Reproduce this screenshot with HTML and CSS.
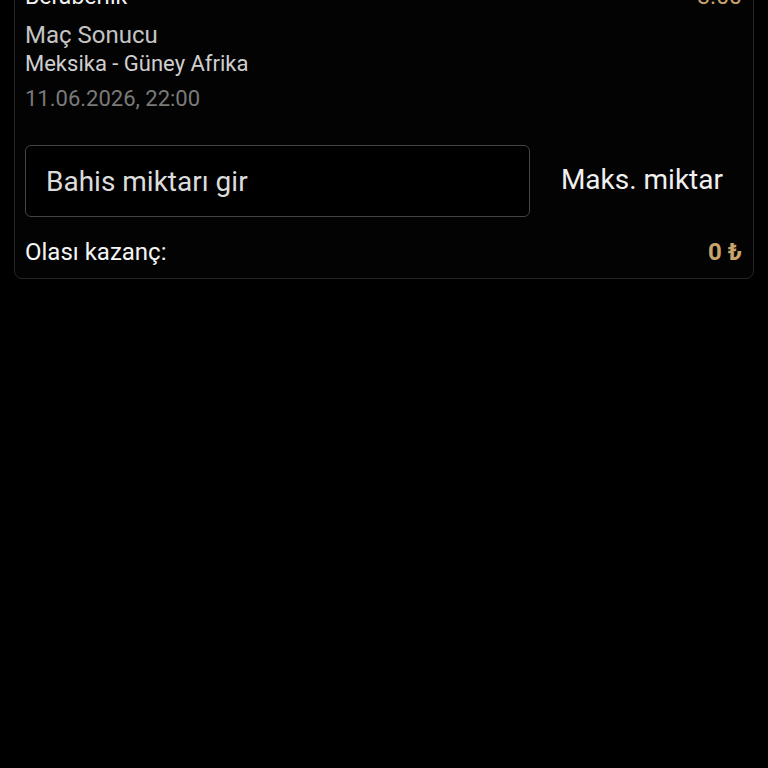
FILE: index.html
```html
<!DOCTYPE html>
<html lang="tr">
<head>
    <meta charset="UTF-8">
    <meta name="viewport" content="width=device-width, initial-scale=1.0">
    <title>Kupon</title>
    <link rel="stylesheet" href="styles.css">
</head>
<body>
    <div class="slip-card">
        <div class="pick-row">
            <span class="pick-name">Beraberlik</span>
            <span class="pick-odd">3.00</span>
        </div>
        <div class="market">Maç Sonucu</div>
        <div class="match">Meksika - Güney Afrika</div>
        <div class="match-date">11.06.2026, 22:00</div>

        <div class="stake-row">
            <input class="stake-input" type="text" placeholder="Bahis miktarı gir">
            <button class="max-btn">Maks. miktar</button>
        </div>

        <div class="win-row">
            <span class="win-label">Olası kazanç:</span>
            <span class="win-value">0 ₺</span>
        </div>
    </div>
</body>
</html>
```

FILE: styles.css
```css
body {
    font-family: Roboto, "Noto Sans", sans-serif;
    background-color: #000000;
    color: #ffffff;
    margin: 0;
    padding: 0;
}
.slip-card {
    margin: -31px 14px 0 14px;
    padding: 12px 11px 12px 10px;
    border: 1px solid #262626;
    border-radius: 8px;
    background-color: #030303;
}
.pick-row {
    display: flex;
    justify-content: space-between;
    align-items: center;
    font-size: 23px;
    line-height: 30px;
}
.pick-name {
    color: #f2f2f2;
}
.pick-odd {
    color: #c9a56d;
}
.market {
    font-size: 24px;
    line-height: 30px;
    color: #c4c4c4;
    margin-top: 8px;
}
.match {
    font-size: 22px;
    line-height: 28px;
    color: #cfcfcf;
}
.match-date {
    font-size: 22px;
    line-height: 28px;
    color: #7a7a7a;
    margin-top: 7px;
}
.stake-row {
    display: flex;
    align-items: center;
    gap: 12px;
    margin-top: 32px;
}
.stake-input {
    flex: 1;
    min-width: 0;
    height: 72px;
    box-sizing: border-box;
    background-color: #000000;
    border: 1px solid #454545;
    border-radius: 6px;
    padding: 0 20px;
    font-family: Roboto, "Noto Sans", sans-serif;
    font-size: 28px;
    color: #e0e0e0;
    outline: none;
}
.stake-input::placeholder {
    color: #dcdcdc;
}
.max-btn {
    background: none;
    border: none;
    padding: 0 19px;
    font-family: Roboto, "Noto Sans", sans-serif;
    font-size: 28px;
    color: #f0f0f0;
    margin-bottom: 4px;
}
.win-row {
    display: flex;
    justify-content: space-between;
    align-items: center;
    font-size: 24px;
    line-height: 28px;
    margin-top: 21px;
}
.win-label {
    color: #f5f5f5;
}
.win-value {
    color: #c9a56d;
    font-weight: 700;
}
```
